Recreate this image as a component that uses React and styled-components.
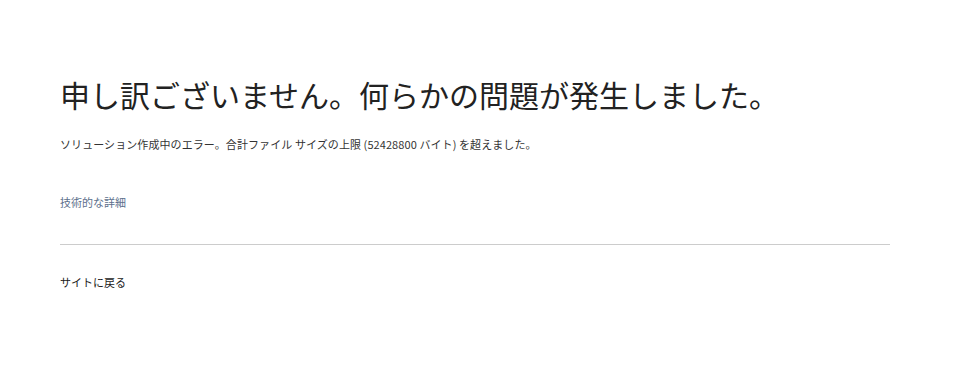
import React from "react";
import styled, { createGlobalStyle } from "styled-components";

const Global = createGlobalStyle`
  body {
    margin: 0;
    background: #ffffff;
    font-family: "Noto Sans CJK JP", "Noto Sans", sans-serif;
    color: #222222;
  }
`;

const Page = styled.main`
  padding: 68px 67px 0 60px;
`;

const Title = styled.h1`
  margin: 0;
  font-size: 30px;
  font-weight: 400;
  line-height: 52px;
  color: #222222;
`;

const Message = styled.p`
  margin: 16px 0 0;
  font-size: 11px;
  line-height: 16px;
  letter-spacing: 0.08px;
  color: #333333;
`;

const DetailsLink = styled.a`
  display: inline-block;
  margin-top: 42px;
  font-size: 11px;
  line-height: 16px;
  color: #5c6f8c;
  text-decoration: none;
  cursor: pointer;
`;

const Divider = styled.hr`
  margin: 32px 0 0;
  border: none;
  border-top: 1px solid #cccccc;
`;

const BackLink = styled.a`
  display: inline-block;
  margin-top: 29px;
  font-size: 11px;
  line-height: 16px;
  color: #222222;
  text-decoration: none;
  cursor: pointer;
`;

export default function App() {
  return (
    <>
      <Global />
      <Page>
        <Title>申し訳ございません。何らかの問題が発生しました。</Title>
        <Message>
          ソリューション作成中のエラー。合計ファイル サイズの上限 (52428800 バイト) を超えました。
        </Message>
        <DetailsLink>技術的な詳細</DetailsLink>
        <Divider />
        <BackLink>サイトに戻る</BackLink>
      </Page>
    </>
  );
}
